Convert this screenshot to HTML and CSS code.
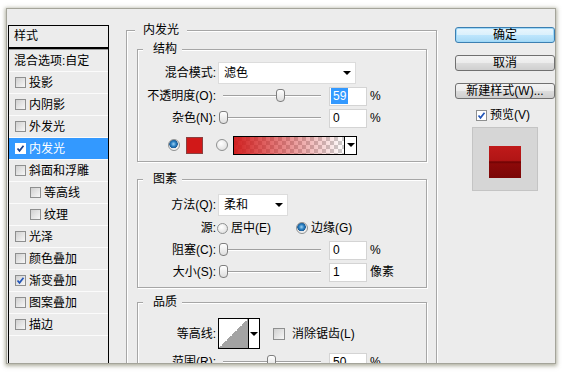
FILE: index.html
```html
<!DOCTYPE html>
<html lang="zh">
<head>
<meta charset="utf-8">
<title>图层样式</title>
<link rel="stylesheet" href="styles.css">
</head>
<body>
<div class="dialog">
  <div class="styles-panel">
    <div class="sp-head">样式</div>
    <ul class="sp-list">
      <li class="sp-item blend">混合选项:自定</li>
      <li class="sp-item"><span class="cb"></span>投影</li>
      <li class="sp-item"><span class="cb"></span>内阴影</li>
      <li class="sp-item"><span class="cb"></span>外发光</li>
      <li class="sp-item sel"><span class="cb on white"><svg viewBox="0 0 9 9"><path d="M1.5 4.5 L3.5 6.8 L7.5 1.8"/></svg></span>内发光</li>
      <li class="sp-item"><span class="cb"></span>斜面和浮雕</li>
      <li class="sp-item sub"><span class="cb"></span>等高线</li>
      <li class="sp-item sub"><span class="cb"></span>纹理</li>
      <li class="sp-item"><span class="cb"></span>光泽</li>
      <li class="sp-item"><span class="cb"></span>颜色叠加</li>
      <li class="sp-item"><span class="cb on"><svg viewBox="0 0 9 9"><path d="M1.5 4.5 L3.5 6.8 L7.5 1.8"/></svg></span>渐变叠加</li>
      <li class="sp-item"><span class="cb"></span>图案叠加</li>
      <li class="sp-item"><span class="cb"></span>描边</li>
    </ul>
  </div>

  <div class="main">
    <fieldset class="grp outer">
      <legend class="lg-outer">内发光</legend>

      <fieldset class="grp inner g-struct">
        <legend>结构</legend>
        <div class="row r1">
          <span class="lbl">混合模式:</span>
          <div class="select s-blend"><span>滤色</span><i class="arrow"></i></div>
        </div>
        <div class="row r2">
          <span class="lbl">不透明度(O):</span>
          <div class="slider"><div class="track"><span class="thumb" style="--v:59%"></span></div></div>
          <div class="num"><span class="val hl">59</span></div>
          <span class="unit">%</span>
        </div>
        <div class="row">
          <span class="lbl">杂色(N):</span>
          <div class="slider"><div class="track"><span class="thumb" style="--v:0%"></span></div></div>
          <div class="num"><span class="val">0</span></div>
          <span class="unit">%</span>
        </div>
        <div class="row r-color">
          <span class="radio on"></span>
          <span class="swatch"></span>
          <span class="radio r-grad"></span>
          <div class="grad"><div class="grad-fill"></div><div class="grad-btn"><i class="arrow"></i></div></div>
        </div>
      </fieldset>

      <fieldset class="grp inner g-elem">
        <legend>图素</legend>
        <div class="row r1">
          <span class="lbl">方法(Q):</span>
          <div class="select s-method"><span>柔和</span><i class="arrow"></i></div>
        </div>
        <div class="row r2">
          <span class="lbl">源:</span>
          <span class="radio r-center"></span><span class="rtext">居中(E)</span>
          <span class="radio on r-edge"></span><span class="rtext">边缘(G)</span>
        </div>
        <div class="row">
          <span class="lbl">阻塞(C):</span>
          <div class="slider"><div class="track"><span class="thumb" style="--v:0%"></span></div></div>
          <div class="num"><span class="val">0</span></div>
          <span class="unit">%</span>
        </div>
        <div class="row">
          <span class="lbl">大小(S):</span>
          <div class="slider"><div class="track"><span class="thumb" style="--v:0%"></span></div></div>
          <div class="num"><span class="val">1</span></div>
          <span class="unit">像素</span>
        </div>
      </fieldset>

      <fieldset class="grp inner g-qual">
        <legend>品质</legend>
        <div class="row r-contour">
          <span class="lbl">等高线:</span>
          <div class="contour"><div class="contour-graph"></div><div class="contour-btn"><i class="arrow"></i></div></div>
          <span class="cb big"></span><span class="rtext">消除锯齿(L)</span>
        </div>
        <div class="row r-range">
          <span class="lbl">范围(R):</span>
          <div class="slider"><div class="track"><span class="thumb" style="--v:50%"></span></div></div>
          <div class="num"><span class="val">50</span></div>
          <span class="unit">%</span>
        </div>
      </fieldset>
    </fieldset>
  </div>

  <div class="side">
    <button class="btn default">确定</button>
    <button class="btn">取消</button>
    <button class="btn">新建样式(W)...</button>
    <div class="pv-check"><span class="cb on"><svg viewBox="0 0 9 9"><path d="M1.5 4.5 L3.5 6.8 L7.5 1.8"/></svg></span>预览(V)</div>
    <div class="preview"><div class="pv-swatch"></div></div>
  </div>
</div>
</body>
</html>
```

FILE: styles.css
```css
* { box-sizing: border-box; }
html, body { margin: 0; padding: 0; background: #fff; }
body {
  width: 562px; height: 372px; overflow: hidden;
  font: 12px/14px "Liberation Sans", "Noto Sans CJK SC", sans-serif;
  color: #000;
}

.dialog {
  margin: 8px 0 0 6px;
  width: 550px; height: 356px;
  background: #ececec;
  border: 1px solid #a4a49a;
  box-shadow: 0 1px 4px 1px rgba(110, 110, 80, .55);
  display: flex; align-items: flex-start;
  overflow: hidden;
}

/* ---------- left styles list ---------- */
.styles-panel {
  flex: none;
  margin: 16px 0 0 1px;
  width: 101px; height: 346px;
  border: 1px solid #000; border-bottom: none;
}
.sp-head {
  height: 23px; padding-left: 5px; line-height: 21px;
  border-bottom: 2px solid #000;
}
.sp-list {
  margin: 0; padding: 0; list-style: none;
  border-top: 1px solid #9c9c9c;
}
.sp-item {
  height: 22px; display: flex; align-items: center;
  padding-left: 6px;
  border-bottom: 1px solid #fbfbfb;
}
.sp-item.blend { padding-left: 5px; }
.sp-item.sub { padding-left: 21px; }
.sp-item.sel { background: #3399ff; color: #fff; }

.cb {
  flex: none; width: 11px; height: 11px; margin-right: 3px;
  border: 1px solid #8e8f8f;
  background: linear-gradient(135deg, #d0d0d0, #f7f7f7);
  display: flex; align-items: center; justify-content: center;
}
.cb svg { width: 9px; height: 9px; }
.cb path { fill: none; stroke: #2255b8; stroke-width: 1.7; }
.cb.white { background: #fff; border-color: #fff; }
.cb.white path { stroke: #1c3f8a; }
.cb.big { width: 12px; height: 12px; margin: 0 4px 0 13px; }

/* ---------- main panel ---------- */
.main { flex: none; margin: 14px 0 0 17px; width: 311px; }

fieldset.grp {
  margin: 0; min-width: 0;
  border: 1px solid #a6a6a6;
  box-shadow: inset 1px 1px 0 #fff, 1px 1px 0 #fff;
}
fieldset.grp legend {
  height: 14px; line-height: 14px;
  background: #ececec;
  margin-left: 5px; padding: 0 5px 0 10px;
}
fieldset.outer { padding: 5px 9px 0 10px; height: 400px; }
fieldset.outer > legend.lg-outer { margin-left: -2px; padding: 0 8px; }

fieldset.inner { padding: 6px 0 5px 0; }
fieldset.g-elem { margin-top: 10px; padding: 8px 0 4px 0; }
fieldset.g-qual { margin-top: 7px; padding: 9px 0 0 0; height: 120px; }

.row { height: 22px; display: flex; align-items: center; }
.row.r2 { margin-top: 1px; }
.lbl { flex: none; width: 78px; text-align: right; }

.select {
  flex: none; height: 22px; margin-left: 2px;
  background: #fff; border: 1px solid #dcdcdc;
  display: flex; align-items: center; justify-content: space-between;
  padding: 0 4px 0 5px;
}
.s-blend { width: 138px; }
.s-method { width: 70px; }
.arrow {
  display: block; width: 0; height: 0;
  border-left: 4px solid transparent; border-right: 4px solid transparent;
  border-top: 4px solid #000;
}

.slider { flex: none; width: 103px; margin-left: 2px; padding-left: 5px; }
.track {
  position: relative; height: 2px;
  border-top: 1px solid #a0a0a0; border-bottom: 1px solid #fff;
}
.thumb {
  position: absolute; top: -7px; left: calc(var(--v) * 0.98 - 4px);
  width: 9px; height: 13px;
  border: 1px solid #7e7e7e; border-radius: 3px 3px 4px 4px;
  background: linear-gradient(#ffffff, #dedede);
}
.num {
  flex: none; width: 38px; height: 19px; margin-left: 8px;
  background: #fff; border: 1px solid #d4d4d4;
  padding-left: 1px; display: flex; align-items: center;
}
.val { padding: 1px 2px; line-height: 14px; }
.val.hl { background: #3399ff; color: #fff; }
.unit { margin-left: 3px; }

.r-color { margin-top: 5px; padding-left: 30px; }
.radio {
  flex: none; width: 12px; height: 12px; border-radius: 50%;
  border: 1px solid #8f9191;
  background: radial-gradient(circle at 40% 35%, #ffffff, #d8d8d8);
}
.radio.on {
  background: radial-gradient(circle at 45% 40%, #9fd2f5 0, #2a7fc0 2.5px, #1a5c99 4px, #e8e8e8 4.5px, #f4f4f4 6px);
}
.swatch {
  flex: none; width: 17px; height: 17px; margin-left: 6px;
  background: #d11818; border: 1px solid #8a4040;
}
.r-grad { margin-left: 13px; }
.grad {
  flex: none; width: 124px; height: 19px; margin-left: 5px;
  border: 1px solid #000; display: flex;
}
.grad-fill {
  flex: 1;
  background:
    linear-gradient(to right, rgba(208, 22, 22, .95), rgba(208, 22, 22, 0)),
    repeating-conic-gradient(#cdcdcd 0 25%, #ffffff 0 50%) 0 0 / 8px 8px;
}
.grad-btn {
  width: 12px; border-left: 1px solid #000; background: #fff;
  display: flex; align-items: center; justify-content: center;
}

.rtext { margin-left: 3px; }
.r-center { margin-left: 1px; width: 11px; height: 11px; }
.r-edge { margin-left: 25px; }

.r-contour { height: 31px; }
.contour {
  flex: none; width: 42px; height: 31px; margin-left: 2px;
  border: 1px solid #000; display: flex;
}
.contour-graph {
  width: 29px;
  background: linear-gradient(to top left, #a3a3a3 50%, #ffffff 50%);
}
.contour-btn {
  flex: 1; border-left: 1px solid #000; background: #fff;
  display: flex; align-items: center; justify-content: center;
}
.r-range { margin-top: 2px; }

/* ---------- right column ---------- */
.side { flex: none; margin: 18px 0 0 18px; width: 104px; }
.btn {
  display: block; width: 100px; height: 16px; margin: 0 0 12px 0; padding: 0;
  font: inherit; line-height: 14px; color: #000; text-align: center;
  border: 1px solid #707070; border-radius: 3px;
  background: linear-gradient(#f3f3f3 0, #ebebeb 50%, #dddddd 50%, #cfcfcf 100%);
}
.btn.default {
  border-color: #3c7fb1;
  background: linear-gradient(#eaf6fd 0, #d9f0fc 50%, #bee6fd 50%, #a7d9f5 100%);
  box-shadow: inset 0 0 0 1px #9ed8f8;
}
.pv-check {
  margin: -3px 0 0 21px; height: 14px;
  display: flex; align-items: center;
}
.pv-check .cb { background: #fff; }
.preview {
  margin: 5px 0 0 17px; width: 66px; height: 64px;
  background: #d6d6d6; border: 1px solid #c4c4c4;
  padding-top: 18px;
}
.pv-swatch {
  margin: 0 auto; width: 32px; height: 32px;
  background: linear-gradient(#c01a1a 0, #b11515 45%, #6e0303 50%, #8c0909 56%, #7a0606 100%);
}
```
